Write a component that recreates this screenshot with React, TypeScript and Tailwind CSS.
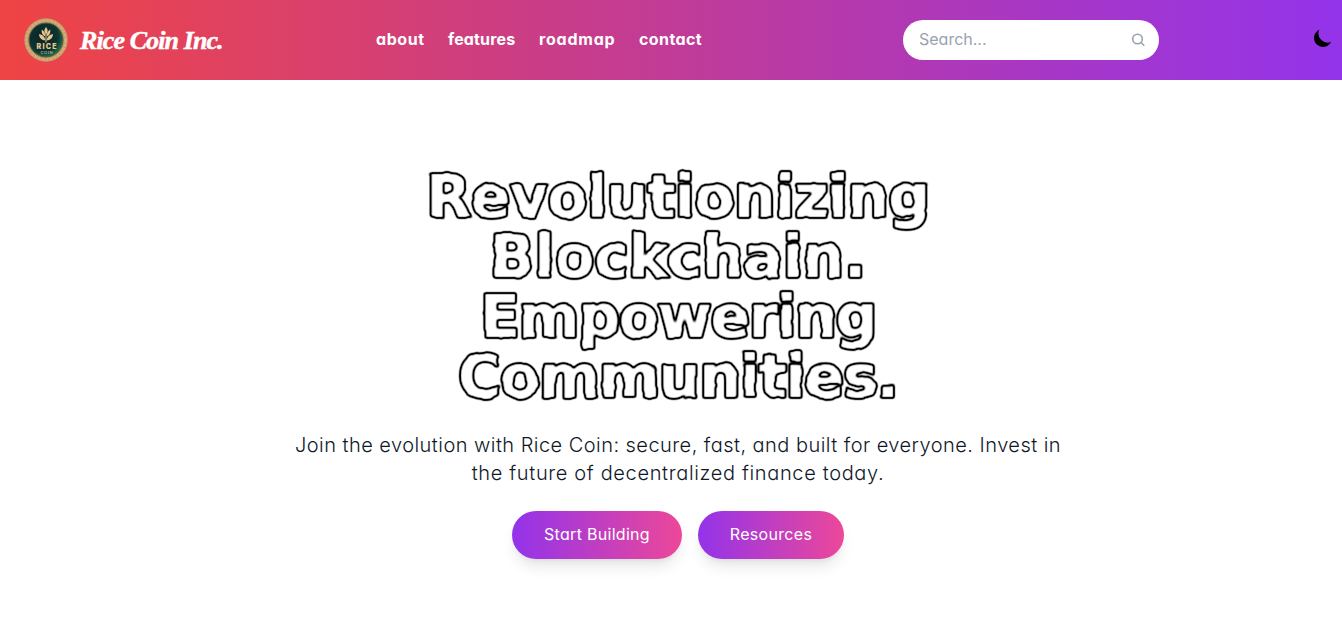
const navItems = [
  { label: "about", style: "w-12 tracking-[0.6px]" },
  { label: "features", style: "w-[67px] tracking-[0.15px]" },
  { label: "roadmap", style: "w-[76px] tracking-[0.8px]" },
  { label: "contact", style: "w-16 tracking-[0.4px]" },
];

const headline = [
  { text: "Revolutionizing", style: "tracking-[-0.6px]" },
  { text: "Blockchain.", style: "tracking-[-0.2px]" },
  { text: "Empowering", style: "tracking-[-1.3px]" },
  { text: "Communities.", style: "tracking-[-1.1px]" },
];

function CoinLogo() {
  return (
    <svg viewBox="0 0 44 44" className="h-11 w-11 shrink-0" role="img" aria-label="Rice Coin">
      <defs>
        <radialGradient id="coin" cx="40%" cy="40%" r="65%">
          <stop offset="0" stopColor="#0c2428" />
          <stop offset="0.7" stopColor="#0c3431" />
          <stop offset="1" stopColor="#1f7a52" />
        </radialGradient>
      </defs>
      <circle cx="22" cy="22" r="21.7" fill="#c49a68" />
      <circle cx="22" cy="22" r="19.6" fill="none" stroke="#d0ad7a" strokeWidth="2.500" strokeDasharray="3 1" />
      <circle cx="22" cy="22" r="17" fill="url(#coin)" stroke="#5d5b3c" strokeWidth="1" />
      <g fill="#e6c68e">
        <path d="M22 9c2.200 2.500 2.200 5 0 7.500-2.200-2.500-2.200-5 0-7.500Z" />
        <path d="M17.800 11.500c2.800 1.800 3.600 4 3.300 7-2.800-1.200-3.900-3.700-3.300-7ZM26.200 11.500c.6 3.300-.5 5.800-3.300 7-.3-3 .5-5.200 3.300-7Z" />
        <path d="M15 16c3.800.7 5.700 2.800 6.500 6.500-4-.3-6.200-2.500-6.500-6.500ZM29 16c-.3 4-2.500 6.200-6.500 6.500.8-3.700 2.700-5.800 6.500-6.500Z" />
        <path d="M21.500 16h1v8.500h-1z" />
      </g>
      <text x="22.500" y="30.800" textAnchor="middle" textLength="20" lengthAdjust="spacing" className="fill-[#e6c68e] font-['Inter',sans-serif] text-[7px] font-black">RICE</text>
      <text x="22.500" y="35.500" textAnchor="middle" textLength="12" className="fill-[#a5a681] font-['Inter',sans-serif] text-[4px] font-bold">COIN</text>
    </svg>
  );
}

function Header() {
  return (
    <header className="flex h-20 items-center bg-linear-to-r/srgb from-[#ef4444] to-[#9333ea]">
      <div className="ml-6 flex w-[352px] items-center gap-3">
        <CoinLogo />
        <span className="whitespace-nowrap pt-0.5 font-['Liberation_Serif',serif] text-[26px] font-bold italic leading-8 tracking-[-0.9px] text-white [-webkit-text-stroke:0.5px_white]">Rice Coin Inc.</span>
      </div>
      <nav className="flex w-[527px] gap-6 pb-0.5 text-base font-bold text-white">
        {navItems.map((item) => (
          <a key={item.label} href={"#" + item.label} className={"whitespace-nowrap " + item.style}>{item.label}</a>
        ))}
      </nav>
      <div className="flex h-10 w-64 items-center justify-between rounded-full bg-white pl-4 pr-3.5">
        <input type="text" placeholder="Search..." className="w-44 bg-transparent pb-0.5 text-base text-gray-700 outline-none placeholder:text-gray-400" />
        <svg viewBox="0 0 14 14" className="h-3.5 w-3.5 text-gray-400" fill="none" stroke="currentColor" strokeWidth="1.600">
          <circle cx="6.500" cy="6" r="4.800" />
          <path d="m10 9.500 3.300 3.300" />
        </svg>
      </div>
      <button aria-label="Toggle theme" className="mb-1 ml-[155px] shrink-0">
        <svg viewBox="2 2 16 16" className="h-[18px] w-[18px]" fill="black">
          <path d="M17.293 13.293A8 8 0 0 1 6.707 2.707a8.001 8.001 0 1 0 10.586 10.586Z" />
        </svg>
      </button>
    </header>
  );
}

function SketchFilter() {
  return (
    <svg className="absolute h-0 w-0" aria-hidden="true">
      <filter id="sketch" x="-5%" y="-5%" width="110%" height="110%" colorInterpolationFilters="sRGB">
        <feTurbulence type="fractalNoise" baseFrequency="0.08" numOctaves="1" seed="4" result="noise" />
        <feDisplacementMap in="SourceAlpha" in2="noise" scale="3.500" xChannelSelector="R" yChannelSelector="G" />
        <feGaussianBlur stdDeviation="0.8" result="soft" />
        <feComponentTransfer in="soft" result="outer">
          <feFuncA type="linear" slope="3" intercept="-0.1" />
        </feComponentTransfer>
        <feComponentTransfer in="soft" result="innerMask">
          <feFuncA type="linear" slope="3" intercept="-1.95" />
        </feComponentTransfer>
        <feFlood floodColor="#ffffff" />
        <feComposite in2="innerMask" operator="in" result="inner" />
        <feMerge>
          <feMergeNode in="outer" />
          <feMergeNode in="inner" />
        </feMerge>
      </filter>
    </svg>
  );
}

export default function App() {
  return (
    <div className="h-[624px] overflow-hidden bg-white font-['Inter',sans-serif] [font-feature-settings:'cv11']">
      <SketchFilter />
      <Header />
      <main className="flex flex-col items-center pl-3.5 pt-[87px]">
        <h1 className="flex flex-col items-center font-['DejaVu_Sans',sans-serif] text-[58.5px] font-black leading-[60px] text-white [-webkit-text-stroke:2px_white] [filter:url(#sketch)]">
          {headline.map((line) => (
            <span key={line.text} className={"block h-[60px] whitespace-nowrap " + line.style}>{line.text}</span>
          ))}
        </h1>
        <p className="mt-6 text-center text-xl font-light leading-7 text-gray-900">
          <span className="block whitespace-nowrap tracking-[0.46px]">Join the evolution with Rice Coin: secure, fast, and built for everyone. Invest in</span>
          <span className="block whitespace-nowrap tracking-[0.65px]">the future of decentralized finance today.</span>
        </p>
        <div className="mt-6 flex gap-4 text-base text-white">
          <button className="h-12 w-[170px] rounded-full bg-linear-to-r/srgb from-[#9333ea] to-[#ec4899] pb-0.5 tracking-[0.3px] shadow-lg">Start Building</button>
          <button className="h-12 w-[146px] rounded-full bg-linear-to-r/srgb from-[#9333ea] to-[#ec4899] pb-0.5 tracking-[0.3px] shadow-lg">Resources</button>
        </div>
      </main>
    </div>
  );
}
